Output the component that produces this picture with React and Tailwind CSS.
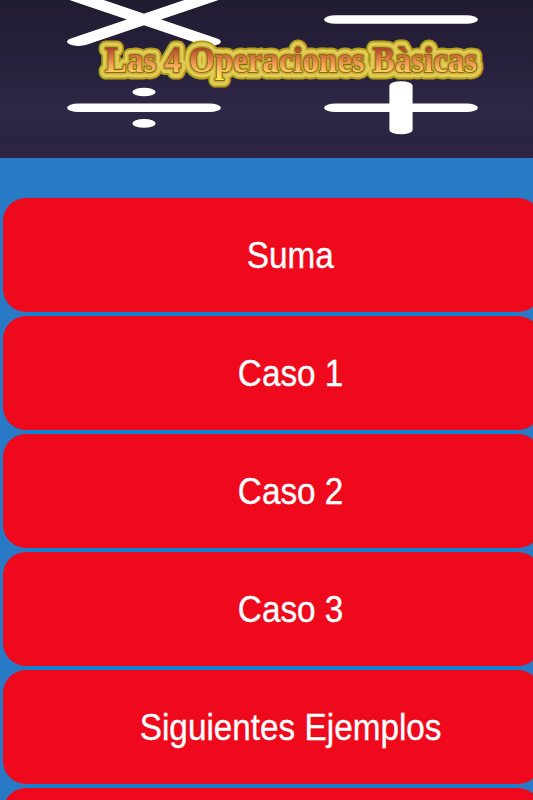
const menuItems = ['Suma', 'Caso 1', 'Caso 2', 'Caso 3', 'Siguientes Ejemplos', ''];

const Banner = () => (
  <svg className="block w-full h-full" viewBox="0 0 533 158">
    <defs>
      <linearGradient id="night" x1="0" y1="0" x2="0" y2="1">
        <stop offset="0" stopColor="#201c30" />
        <stop offset="0.3" stopColor="#261f3a" />
        <stop offset="0.74" stopColor="#2e2747" />
        <stop offset="0.88" stopColor="#292240" />
        <stop offset="1" stopColor="#2e2644" />
      </linearGradient>
      <linearGradient id="fire" gradientUnits="userSpaceOnUse" x1="0" y1="46" x2="0" y2="80">
        <stop offset="0" stopColor="#a8382c" />
        <stop offset="0.3" stopColor="#d8703f" />
        <stop offset="0.7" stopColor="#fcc060" />
        <stop offset="1" stopColor="#fff04a" />
      </linearGradient>
    </defs>
    <rect width="533" height="158" fill="url(#night)" />

    {/* Operation signs, stretched horizontally */}
    <g stroke="#fff" strokeWidth="8.6" strokeLinecap="round" fill="#fff">
      <path transform="translate(144 19.5) scale(2.7 1)" d="M-24.2-22.2 24.2 22.2M24.2-22.2-24.2 22.2" />
      <path transform="translate(401 19.5) scale(2.7 1)" d="M-24.2 0H24.2" />
      <path transform="translate(144 107.7) scale(2.7 1)" d="M-24.2 0H24.2M0-15.7V-15.69M0 15.7V15.71" />
      <path transform="translate(401 107.7) scale(2.7 1)" d="M-24.2 0H24.2M0-22.2V22.2" />
    </g>

    {/* Title: gold halo, dark rim, then the letters */}
    <g fontFamily="'Liberation Serif', serif" fontSize="35" fontWeight="700" strokeLinejoin="round">
      <text x="105" y="72" textLength="372" lengthAdjust="spacingAndGlyphs" fill="#b39c18" stroke="#b39c18" strokeWidth="15">Las 4 Operaciones Bàsicas</text>
      <text x="105" y="72" textLength="372" lengthAdjust="spacingAndGlyphs" fill="#e2cc58" stroke="#e2cc58" strokeWidth="11">Las 4 Operaciones Bàsicas</text>
      <text x="105" y="72" textLength="372" lengthAdjust="spacingAndGlyphs" fill="#c4aa30" stroke="#c4aa30" strokeWidth="4.5">Las 4 Operaciones Bàsicas</text>
      <text x="105" y="72" textLength="372" lengthAdjust="spacingAndGlyphs" fill="#80600f" stroke="#80600f" strokeWidth="1.6">Las 4 Operaciones Bàsicas</text>
      <text x="105" y="72" textLength="372" lengthAdjust="spacingAndGlyphs" fill="url(#fire)">Las 4 Operaciones Bàsicas</text>
    </g>
  </svg>
);

const MenuButton = ({ label }) => (
  <button className="flex items-center justify-center w-[538px] h-[114px] pl-[37px] shrink-0 rounded-[23px] bg-[#ee0a1c] text-white text-[37px] leading-none">
    <span className="scale-x-90 whitespace-nowrap [-webkit-text-stroke:0.35px_white]">{label}</span>
  </button>
);

export default function App() {
  return (
    <div className="w-full h-screen overflow-hidden bg-[#287ac6] font-['Liberation_Sans',sans-serif]">
      <header className="h-[158px]">
        <Banner />
      </header>
      <nav className="flex flex-col pt-10 pl-[3px]">
        {menuItems.map((label, index) => (
          <div key={index} className="w-[538px]">
            {index > 0 && <div className="h-1 mx-6 bg-[#1182d3]" />}
            <MenuButton label={label} />
          </div>
        ))}
      </nav>
    </div>
  );
}
